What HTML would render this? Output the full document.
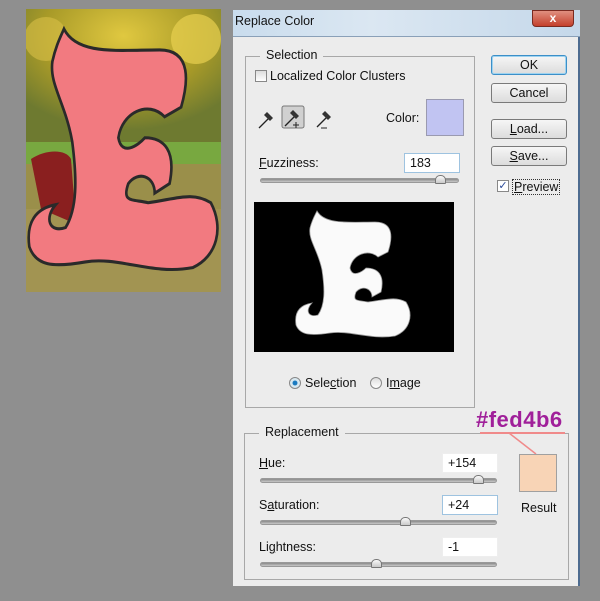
<!DOCTYPE html>
<html><head><meta charset="utf-8"><style>
*{margin:0;padding:0;box-sizing:border-box}
body{width:600px;height:601px;background:#8f8f8f;position:relative;overflow:hidden;font-family:"Liberation Sans",sans-serif;font-size:12px;color:#111}
.a{position:absolute}
.grp{position:absolute;border:1px solid #a8a8a8}
.lg{position:absolute;background:#ececec;padding:0 6px;font-size:12.5px}
.btn{position:absolute;width:76px;height:20px;border:1px solid #7a7a7a;border-radius:3px;background:linear-gradient(#f6f6f6,#dcdcdc);text-align:center;line-height:18px;font-size:12.5px}
.inp{position:absolute;background:#fff;border:1px solid #d6d6d6;height:20px;line-height:18px;padding-left:5px;font-size:12.5px}
.trk{position:absolute;height:5px;border-radius:3px;background:linear-gradient(#8a8a8a,#c8c8c8);border:1px solid #999}
.th{position:absolute;width:11px;height:9px;background:linear-gradient(#fafafa,#c9c9c9);border:1px solid #777;border-radius:5px 5px 1px 1px}
</style></head><body>
<div class="a" style="left:26px;top:9px;width:195px;height:283px;overflow:hidden;background:#8f8e48">
<svg width="195" height="283" style="position:absolute;left:0;top:0">
<defs><radialGradient id="f" cx="50%" cy="20%" r="70%"><stop offset="0" stop-color="#e0c840"/><stop offset=".6" stop-color="#a89a28"/><stop offset="1" stop-color="#6e7a30"/></radialGradient></defs>
<rect x="0" y="0" width="195" height="135" fill="url(#f)"/>
<circle cx="170" cy="30" r="25" fill="#e8d050" opacity=".7"/>
<circle cx="20" cy="30" r="22" fill="#d8c048" opacity=".6"/>
<rect x="0" y="133" width="195" height="22" fill="#78a840"/>
<rect x="0" y="155" width="195" height="128" fill="#9a8f4a"/>
<rect x="0" y="200" width="195" height="83" fill="#a89858" opacity=".6"/>
<path d="M5,150 C20,140 40,140 45,150 L50,215 L15,200 Z" fill="#8a1f1f"/>
<g transform="translate(0,18) scale(1.65,1.91) translate(-294,-210)">
<path d="M317,211 C325,225 350,222 375,222 C395,222 392,240 388,252 L378,257 C368,248 352,255 350,268 C352,278 362,272 366,268 C378,268 385,275 381,292 L372,297 C372,288 362,285 356,292 C352,302 358,300 368,302 C385,300 395,296 406,302 C414,315 410,330 395,336 C370,340 350,330 330,333 C310,336 300,335 296,325 C294,312 300,305 312,303 C305,310 308,318 318,315 C325,305 325,290 322,270 C318,250 308,240 310,228 C312,220 315,215 317,211 Z" fill="#f27a80" stroke="#2a2a2a" stroke-width="1.6"/>
</g>
</svg></div>
<div class="a" style="left:233px;top:10px;width:347px;height:576px;background:#ececec;border-right:2px solid #4d6b8f"></div>
<div class="a" style="left:233px;top:10px;width:347px;height:27px;background:linear-gradient(90deg,#c9dced,#dbe7f2 40%,#c5d8ea);border-bottom:1px solid #8aa0b8"></div>
<div class="a" style="left:235px;top:14px;font-size:12.5px">Replace Color</div>
<div class="a" style="left:532px;top:10px;width:42px;height:17px;background:linear-gradient(#e09080,#c4402c);border:1px solid #7a2a20;border-radius:0 0 4px 4px;color:#fff;text-align:center;font-weight:bold;line-height:15px">x</div>
<div class="grp" style="left:245px;top:56px;width:230px;height:352px"></div>
<div class="lg" style="left:260px;top:48px">Selection</div>
<div class="a" style="left:255px;top:70px;width:12px;height:12px;border:1px solid #888;background:linear-gradient(#ddd,#fff)"></div>
<div class="a" style="left:270px;top:69px;font-size:12.5px">Localized Color Clusters</div>
<svg class="a" style="left:252px;top:100px" width="90" height="40">
<g stroke="#222" fill="none" stroke-width="1.3"><path d="M8,27 L16,19 M7,28 L18,17"/></g><path d="M15,12 L21,18 L18,21 L12,15 Z" fill="#333"/>
<rect x="30" y="6" width="22" height="22" rx="2" fill="#d0d0d0" stroke="#777"/>
<g stroke="#222" fill="none" stroke-width="1.3"><path d="M33,26 L43,16"/></g><path d="M41,10 L47,16 L44,19 L38,13 Z" fill="#333"/><path d="M44,22 v6 M41,25 h6" stroke="#222"/>
<g stroke="#222" fill="none" stroke-width="1.3"><path d="M65,27 L75,17"/></g><path d="M73,11 L79,17 L76,20 L70,14 Z" fill="#333"/><path d="M69,28 h6" stroke="#222"/>
</svg>
<div class="a" style="left:386px;top:111px;font-size:12.5px">Color:</div>
<div class="a" style="left:426px;top:99px;width:38px;height:37px;background:#c1c4f2;border:1px solid #9a9ab0"></div>
<div class="a" style="left:259px;top:156px;font-size:12.5px"><u>F</u>uzziness:</div>
<div class="inp" style="left:404px;top:153px;width:56px;border-color:#9ec3e0">183</div>
<div class="trk" style="left:260px;top:178px;width:199px"></div>
<div class="th" style="left:435px;top:175px"></div>
<div class="a" style="left:254px;top:202px;width:200px;height:150px;background:#000"></div>
<svg class="a" style="left:0;top:0" width="600" height="601"><path d="M317,211 C325,225 350,222 375,222 C395,222 392,240 388,252 L378,257 C368,248 352,255 350,268 C352,278 362,272 366,268 C378,268 385,275 381,292 L372,297 C372,288 362,285 356,292 C352,302 358,300 368,302 C385,300 395,296 406,302 C414,315 410,330 395,336 C370,340 350,330 330,333 C310,336 300,335 296,325 C294,312 300,305 312,303 C305,310 308,318 318,315 C325,305 325,290 322,270 C318,250 308,240 310,228 C312,220 315,215 317,211 Z" fill="#fafafa" stroke="#999" stroke-width=".8"/></svg>
<div class="a" style="left:289px;top:377px;width:12px;height:12px;border-radius:50%;border:1px solid #888;background:radial-gradient(#1a7ac0 30%,#d8e8f0 40%)"></div>
<div class="a" style="left:305px;top:376px;font-size:12.5px">Sele<u>c</u>tion</div>
<div class="a" style="left:370px;top:377px;width:12px;height:12px;border-radius:50%;border:1px solid #888;background:linear-gradient(#ddd,#fff)"></div>
<div class="a" style="left:386px;top:376px;font-size:12.5px">I<u>m</u>age</div>
<div class="btn" style="left:491px;top:55px;border-color:#3c8fc8;box-shadow:0 0 0 1px #9ed3f0 inset">OK</div>
<div class="btn" style="left:491px;top:83px">Cancel</div>
<div class="btn" style="left:491px;top:119px"><u>L</u>oad...</div>
<div class="btn" style="left:491px;top:146px"><u>S</u>ave...</div>
<div class="a" style="left:497px;top:180px;width:12px;height:12px;border:1px solid #888;background:#fff;color:#2a4a9a;font-size:11px;line-height:10px;text-align:center">✓</div>
<div class="a" style="left:512px;top:179px;font-size:12.5px;border:1px dotted #333;padding:0 1px"><u>P</u>review</div>
<div class="grp" style="left:244px;top:433px;width:325px;height:147px"></div>
<div class="lg" style="left:259px;top:425px">Replacement</div>
<div class="a" style="left:480px;top:432px;width:85px;height:2px;background:#f08a8a"></div>
<svg class="a" style="left:500px;top:430px" width="60" height="30"><path d="M9,3 L36,24" stroke="#f08a8a" stroke-width="1.5"/></svg>
<div class="a" style="left:476px;top:407px;font-size:22px;font-weight:bold;color:#a0209a;letter-spacing:.5px">#fed4b6</div>
<div class="a" style="left:519px;top:454px;width:38px;height:38px;background:#f8d4b6;border:1px solid #a0a0a0"></div>
<div class="a" style="left:521px;top:501px;font-size:12.5px">Result</div>
<div class="a" style="left:259px;top:456px;font-size:12.5px"><u>H</u>ue:</div>
<div class="inp" style="left:442px;top:453px;width:56px;border-color:#eee">+154</div>
<div class="trk" style="left:260px;top:478px;width:237px"></div>
<div class="th" style="left:473px;top:475px"></div>
<div class="a" style="left:259px;top:498px;font-size:12.5px">S<u>a</u>turation:</div>
<div class="inp" style="left:442px;top:495px;width:56px;border-color:#9ec3e0">+24</div>
<div class="trk" style="left:260px;top:520px;width:237px"></div>
<div class="th" style="left:400px;top:517px"></div>
<div class="a" style="left:259px;top:540px;font-size:12.5px">Li<u>g</u>htness:</div>
<div class="inp" style="left:442px;top:537px;width:56px;border-color:#eee">-1</div>
<div class="trk" style="left:260px;top:562px;width:237px"></div>
<div class="th" style="left:371px;top:559px"></div>
</body></html>
